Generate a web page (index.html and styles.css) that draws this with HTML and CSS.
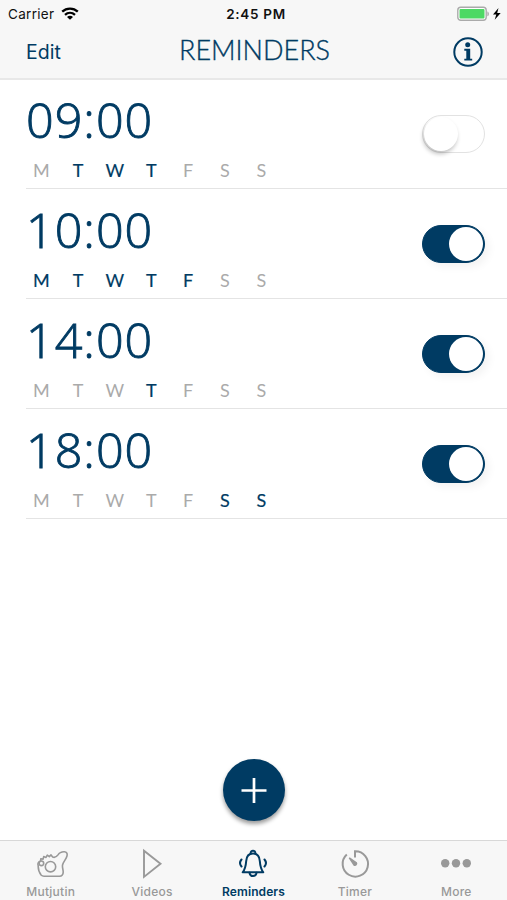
FILE: index.html
```html
<!DOCTYPE html>
<html lang="en">
<head>
<meta charset="utf-8">
<title>Reminders</title>
<link rel="stylesheet" href="styles.css">
</head>
<body>
<div class="app">
  <header class="top">
    <div class="status">
      <div class="carrier"><span>Carrier</span>
        <svg width="18" height="13" viewBox="0 0 18 13" fill="none" stroke="#000" stroke-width="2.3"><path d="M1.2 4.7C5.6.6 12.4.6 16.8 4.7M4 7.8c2.9-2.6 7.1-2.6 10 0"/><path d="M9 12.7 6 9.9c1.700-1.500 4.300-1.500 6 0z" fill="#000" stroke="none"/></svg>
      </div>
      <div class="clock">2:45 PM</div>
      <svg class="battery" width="45" height="16" viewBox="0 0 45 16"><rect x=".8" y="1.300" width="28.400" height="13" rx="3" fill="#fff" stroke="#aaa" stroke-width="1.400"/><rect x="2.500" y="3" width="25" height="9.600" rx="1" fill="#4cd964"/><path d="M30.400 5.500c2 .5 2 4.300 0 4.800z" fill="#aaa"/><path d="m41.500 2-5.500 6.500h3.300l-1.600 5.200 6-6.800h-3.500z" fill="#000"/></svg>
    </div>
    <nav class="nav">
      <span class="edit">Edit</span>
      <h1>REMINDERS</h1>
      <svg class="info" width="30" height="30" viewBox="0 0 30 30"><circle cx="15" cy="15" r="13.700" fill="none" stroke="#003b63" stroke-width="2"/><circle cx="14.700" cy="7.800" r="2.500" fill="#003b63"/><path d="M11.300 11.700h5.900v10h2v1.900h-7.900v-1.900h2v-8h-2z" fill="#003b63"/></svg>
    </nav>
  </header>
  <main class="list">
    <section class="row">
      <div><div class="time">09:00</div><div class="days"><span>M</span><b>T</b><b>W</b><b>T</b><span>F</span><span>S</span><span>S</span></div></div>
      <div class="switch"><i></i></div>
    </section>
    <section class="row">
      <div><div class="time">10:00</div><div class="days"><b>M</b><b>T</b><b>W</b><b>T</b><b>F</b><span>S</span><span>S</span></div></div>
      <div class="switch on"><i></i></div>
    </section>
    <section class="row">
      <div><div class="time">14:00</div><div class="days"><span>M</span><span>T</span><span>W</span><b>T</b><span>F</span><span>S</span><span>S</span></div></div>
      <div class="switch on"><i></i></div>
    </section>
    <section class="row">
      <div><div class="time">18:00</div><div class="days"><span>M</span><span>T</span><span>W</span><span>T</span><span>F</span><b>S</b><b>S</b></div></div>
      <div class="switch on"><i></i></div>
    </section>
  </main>
  <div class="add"><svg width="62" height="62" viewBox="0 0 62 62" stroke="#fff" stroke-width="2.700"><path d="M18.500 31.500h25M31 19v25"/></svg></div>
  <footer class="tabs">
    <div class="tab"><svg width="34" height="32" viewBox="0 0 34 32" fill="none" stroke="#999" stroke-width="1.600" stroke-linejoin="round"><path d="M7.300 27.300C5 24.500 4 21.500 4.200 17.500c-.8-2 .4-4 2.400-4.300l.2-2.400 2.300.3.600-2.500 2.300.8 1.300-2.300 2 1.500 1.700-1.700 1.700 2.200c2.300.8 4-.4 5.300-2.200 1.300-2.200 3.500-3.300 6.300-3.200 2.600.1 3.300 2 2.600 4.500-.8 3-3.600 5.800-4.300 8.500-.6 2.400.5 4.500.6 7 .1 2.700-1.300 4.500-3.700 4.500H10c-1.300 0-2-.2-2.700-.9z"/><circle cx="16.500" cy="18.700" r="5.200"/><circle cx="7.400" cy="15.300" r="2.300"/></svg><span>Mutjutin</span></div>
    <div class="tab"><svg width="34" height="32" viewBox="0 0 34 32" fill="none" stroke="#999" stroke-width="1.900"><path d="M9 2.700v26.200l16.500-13.100z"/></svg><span>Videos</span></div>
    <div class="tab active"><svg width="34" height="32" viewBox="0 0 34 32" fill="none" stroke="#003b63" stroke-width="2" stroke-linecap="round" stroke-linejoin="round"><path d="M17 5.500c-4.700 0-6.500 3.300-6.800 7.500-.4 5.500-.9 8-3.500 11.300h20.600c-2.600-3.300-3.100-5.800-3.500-11.300-.3-4.200-2.100-7.500-6.800-7.500z"/><path d="M14.700 5.500c-.6-3.800 5.200-3.800 4.600 0M13.500 24.800c.7 4.400 6.300 4.400 7 0M5.500 11.500c-1.700 2-1.700 5 0 7M28.500 11.500c1.700 2 1.700 5 0 7"/></svg><span>Reminders</span></div>
    <div class="tab"><svg width="34" height="32" viewBox="0 0 34 32" fill="none" stroke="#999" stroke-width="2"><path d="M17 9.500V3.200A12.700 12.700 0 1 1 8.800 6.500"/><path d="m11.300 9.800 7 4.900a1.700 1.700 0 0 1-2.300 2.400z" fill="#999" stroke-width="1.400"/></svg><span>Timer</span></div>
    <div class="tab"><svg width="34" height="32" viewBox="0 0 34 32" fill="#999"><circle cx="6.200" cy="15.300" r="4.200"/><circle cx="17" cy="15.300" r="4.200"/><circle cx="27.800" cy="15.300" r="4.200"/></svg><span>More</span></div>
  </footer>
</div>
</body>
</html>
```
FILE: styles.css
```css
* { box-sizing: border-box; }
body { margin: 0; font-family: Inter, "Liberation Sans", sans-serif; background: #fff; color: #003b63; }
svg { display: block; flex: none; }
.app { height: 900px; width: 507px; display: flex; flex-direction: column; overflow: hidden; }
.top { height: 80px; background: #f7f7f7; border-bottom: 2px solid #e8e8e8; }
.status { height: 27px; display: grid; grid-template-columns: 1fr auto 1fr; align-items: center; padding: 0 5px 0 8px; color: #111; }
.carrier { display: flex; align-items: center; gap: 7px; font-size: 13.5px; letter-spacing: .3px; }
.clock { font-size: 13.5px; font-weight: 600; letter-spacing: .7px; margin-left: 2px; }
.battery { justify-self: end; }
.nav { height: 50px; display: grid; grid-template-columns: 1fr auto 1fr; align-items: center; padding: 0 24px 0 26px; }
.edit { font-size: 19.5px; }
h1 { margin: -4px 0 0; font: 300 27px/32px Lato, sans-serif; -webkit-text-stroke: .35px #003b63; }
.info { justify-self: end; }
.list { flex: 1; }
.row { height: 110px; margin-left: 26px; padding-right: 22px; display: flex; justify-content: space-between; border-bottom: 1px solid #e4e4e4; }
.row:first-child { height: 109px; }
.row:first-child .time { margin-top: 9px; }
.row:first-child .switch { margin-top: 35px; }
.time { margin: 10px 0 0; height: 60px; font: 300 48.5px/60px "Open Sans", sans-serif; letter-spacing: 1px; white-space: nowrap; -webkit-text-stroke: .9px #003b63; }
.days { display: flex; margin: 9px 0 0 -3px; font: 400 18px/24px Lato, sans-serif; color: #aaa; }
.days span, .days b { width: 36.7px; text-align: center; }
.days b { color: #003b63; font-weight: 400; -webkit-text-stroke: .2px #003b63; }
.switch { width: 63px; height: 38px; margin-top: 36px; padding: 1px; border: 1px solid #e2e2e2; border-radius: 19px; display: flex; }
.switch i { width: 34px; height: 34px; border-radius: 50%; background: #fff; box-shadow: -1px 3px 4px rgba(0,0,0,.24); }
.switch.on { background: #003b63; border-color: #003b63; justify-content: flex-end; box-shadow: 4px 4px 8px rgba(0,0,0,.05); }
.switch.on i { box-shadow: none; }
.add { width: 62px; height: 62px; border-radius: 50%; background: #003b63; box-shadow: 0 3px 4px rgba(0,0,0,.4); align-self: center; margin-bottom: 19px; }
.tabs { height: 60px; display: grid; grid-template-columns: repeat(5, 1fr); background: #f7f7f7; border-top: 1px solid #d8d8d8; }
.tab { display: flex; flex-direction: column; align-items: center; padding-top: 7px; color: #999; font-size: 12px; line-height: 16px; font-weight: 500; letter-spacing: .25px; }
.tab span { margin-top: 4px; }
.tab.active { color: #003b63; font-weight: 600; letter-spacing: .1px; }
```
